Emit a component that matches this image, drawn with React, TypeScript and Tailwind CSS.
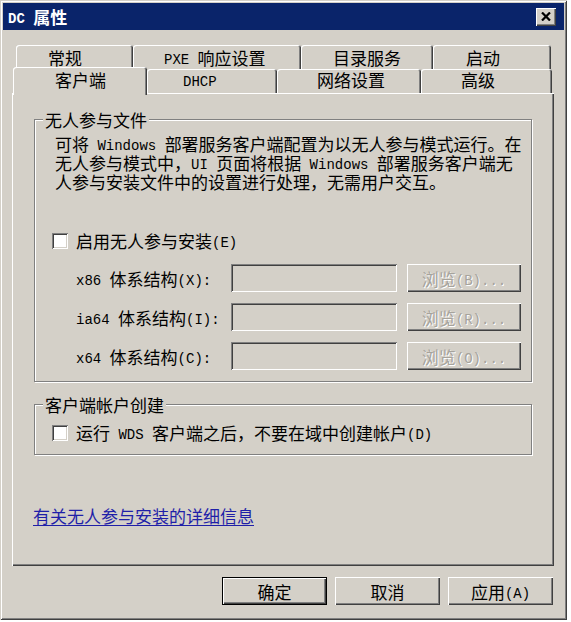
import React from "react";

const raised =
  "bg-[#d4d0c8] shadow-[inset_1px_1px_0_#fff,inset_-1px_-1px_0_#404040,inset_-2px_-2px_0_#808080]";
const sunken =
  "shadow-[inset_1px_1px_0_#808080,inset_-1px_-1px_0_#fff,inset_2px_2px_0_#404040,inset_-2px_-2px_0_#d4d0c8]";
const tabEdge =
  "rounded-t-[3px] bg-[#d4d0c8] shadow-[inset_1px_1px_0_#fff,inset_-1px_0_0_#404040,inset_-2px_0_0_#808080]";
const etched =
  "border border-[#808080] shadow-[inset_1px_1px_0_#fff,1px_1px_0_#fff]";

// half-width latin run, like the SimSun bitmap font
function L({ children }: { children: React.ReactNode }) {
  return (
    <span className="relative top-[3px] align-top font-['Liberation_Mono',monospace] text-[14px] leading-[19px]">
      {children}
    </span>
  );
}

function Line({ children }: { children: React.ReactNode }) {
  return <div className="h-[19px] whitespace-nowrap">{children}</div>;
}

function CheckBox() {
  return <div className={`w-[16px] h-[16px] bg-white shrink-0 ${sunken}`} />;
}

function ArchRow({ label, btn }: { label: React.ReactNode; btn: string }) {
  return (
    <div className="flex items-center h-[28px] pl-[41px]">
      <div className="w-[155px] h-[19px] whitespace-nowrap">{label}</div>
      <div className={`w-[166px] h-[28px] bg-[#d4d0c8] ${sunken}`} />
      <div
        className={`ml-[10px] w-[114px] h-[28px] flex items-center justify-center text-[#a6a39c] [text-shadow:1px_1px_0_#fff] ${raised}`}
      >
        <span className="h-[19px] whitespace-nowrap">
          浏览<L>({btn})...</L>
        </span>
      </div>
    </div>
  );
}

export default function App() {
  return (
    <div className="w-[571px] h-[622px] bg-white font-['Noto_Sans_CJK_SC',sans-serif] text-[17px] leading-[19px] text-black">
      <div className="w-[567px] h-[620px] bg-[#d4d0c8] p-[3px] flex flex-col shadow-[inset_1px_1px_0_#d4d0c8,inset_-1px_-1px_0_#404040,inset_2px_2px_0_#fff,inset_-2px_-2px_0_#808080]">
        {/* title bar */}
        <div className="h-[27px] bg-[#0a246a] flex items-center justify-between pl-[5px] pr-[8px]">
          <span className="h-[19px] text-white font-bold whitespace-nowrap">
            <L>DC </L>属性
          </span>
          <div className={`w-[20px] h-[18px] flex items-center justify-center ${raised}`}>
            <svg width="10" height="9" viewBox="0 0 10 9">
              <path d="M1 0.5 L9 8.5 M9 0.5 L1 8.5" stroke="#000" strokeWidth="2.2" />
            </svg>
          </div>
        </div>

        <div className="pl-[9px] pt-[15px] flex flex-col">
          {/* back tab row */}
          <div className="flex ml-[4px] h-[24px]">
            <div className={`w-[117px] h-[24px] pl-[32px] pt-[3px] ${tabEdge}`}>常规</div>
            <div className={`w-[168px] h-[24px] pl-[31px] pt-[3px] whitespace-nowrap ${tabEdge}`}>
              <L>PXE </L>响应设置
            </div>
            <div className={`w-[132px] h-[24px] pl-[32px] pt-[3px] ${tabEdge}`}>目录服务</div>
            <div className={`w-[118px] h-[24px] pl-[33px] pt-[3px] ${tabEdge}`}>启动</div>
          </div>
          {/* front tab row */}
          <div className="flex items-start ml-[1px] -mt-[2px] h-[26px]">
            <div className={`relative z-10 w-[134px] h-[28px] pl-[42px] pt-[3px] ${tabEdge}`}>客户端</div>
            <div className={`mt-[2px] w-[130px] h-[24px] pl-[36px] pt-[1px] ${tabEdge}`}>
              <L>DHCP</L>
            </div>
            <div className={`mt-[2px] w-[144px] h-[24px] pl-[40px] pt-[1px] ${tabEdge}`}>网络设置</div>
            <div className={`mt-[2px] w-[131px] h-[24px] pl-[40px] pt-[1px] ${tabEdge}`}>高级</div>
          </div>

          {/* page */}
          <div className="w-[542px] h-[473px] flex flex-col shadow-[inset_1px_1px_0_#fff,inset_-1px_-1px_0_#404040,inset_-2px_-2px_0_#808080]">
            <fieldset className={`mt-[17px] ml-[22px] w-[498px] pb-[11px] ${etched}`}>
              <legend className="ml-[8px] px-[2px] h-[19px] bg-[#d4d0c8]">无人参与文件</legend>
              <div className="mt-[5px] pl-[20px]">
                <Line>
                  可将<L> Windows </L>部署服务客户端配置为以无人参与模式运行。在
                </Line>
                <Line>
                  无人参与模式中，<L>UI </L>页面将根据<L> Windows </L>部署服务客户端无
                </Line>
                <Line>人参与安装文件中的设置进行处理，无需用户交互。</Line>
              </div>
              <div className="mt-[40px] h-[19px] flex items-center pl-[17px]">
                <CheckBox />
                <span className="ml-[8px] h-[19px] whitespace-nowrap">
                  启用无人参与安装<L>(E)</L>
                </span>
              </div>
              <div className="mt-[14px] flex flex-col gap-[11px]">
                <ArchRow
                  label={
                    <>
                      <L>x86 </L>体系结构<L>(X):</L>
                    </>
                  }
                  btn="B"
                />
                <ArchRow
                  label={
                    <>
                      <L>ia64 </L>体系结构<L>(I):</L>
                    </>
                  }
                  btn="R"
                />
                <ArchRow
                  label={
                    <>
                      <L>x64 </L>体系结构<L>(C):</L>
                    </>
                  }
                  btn="O"
                />
              </div>
            </fieldset>

            <fieldset className={`mt-[13px] ml-[22px] w-[498px] pb-[12px] ${etched}`}>
              <legend className="ml-[8px] px-[2px] h-[19px] bg-[#d4d0c8]">客户端帐户创建</legend>
              <div className="mt-[9px] h-[19px] flex items-center pl-[17px]">
                <CheckBox />
                <span className="ml-[8px] h-[19px] whitespace-nowrap">
                  运行<L> WDS </L>客户端之后，不要在域中创建帐户<L>(D)</L>
                </span>
              </div>
            </fieldset>

            <a className="mt-[51px] ml-[21px] h-[19px] self-start text-[#1f1fa8] underline underline-offset-2 cursor-pointer">
              有关无人参与安装的详细信息
            </a>
          </div>

          {/* dialog buttons */}
          <div className="mt-[11px] w-[541px] flex justify-end gap-[8px]">
            <div className="w-[105px] h-[28px] border border-black">
              <div className={`w-full h-full flex items-center justify-center ${raised}`}>确定</div>
            </div>
            <div className={`w-[105px] h-[28px] flex items-center justify-center ${raised}`}>取消</div>
            <div className={`w-[105px] h-[28px] flex items-center justify-center ${raised}`}>
              <span className="h-[19px] whitespace-nowrap">
                应用<L>(A)</L>
              </span>
            </div>
          </div>
        </div>
      </div>
    </div>
  );
}
